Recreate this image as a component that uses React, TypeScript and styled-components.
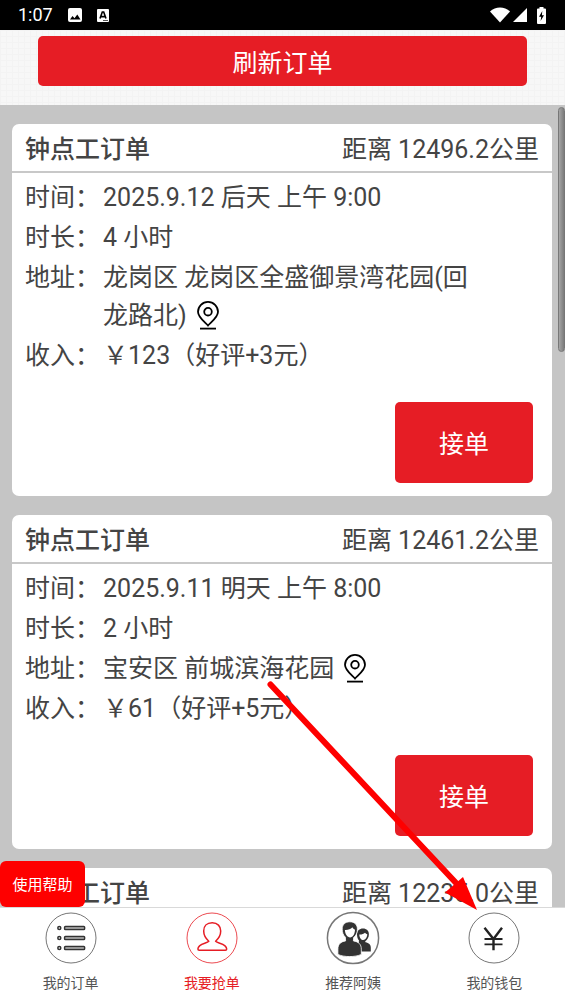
import React from "react";
import styled, { createGlobalStyle, css } from "styled-components";

const RED = "#e61d25";
const INK = "#444444";

const GlobalStyle = createGlobalStyle`
  *, *::before, *::after { box-sizing: border-box; }
  body {
    margin: 0;
    color: ${INK};
    font-family: Roboto, "Noto Sans CJK SC", sans-serif;
    font-size: 25px;
  }
  button { font-family: inherit; border: 0; padding: 0; cursor: pointer; }
  h2, dl, dt, dd { margin: 0; }
`;

const Screen = styled.div`
  position: relative;
  display: flex;
  flex-direction: column;
  height: 100vh;
  overflow: hidden;
  background: #c5c5c5;
`;

const StatusBar = styled.div`
  display: flex;
  flex: none;
  align-items: center;
  justify-content: space-between;
  height: 30px;
  padding: 0 19px 0 18px;
  background: #000;
  color: #fff;
  font-size: 18px;
  line-height: 30px;
`;

const StatusGroup = styled.div<{ $gap: number }>`
  display: flex;
  align-items: center;
  gap: ${(p) => p.$gap}px;
`;

const Toolbar = styled.header`
  flex: none;
  padding: 6px 38px 19px;
  background-color: #f7f7f7;
  background-image: linear-gradient(#f3f3f3 1px, transparent 1px),
    linear-gradient(90deg, #f3f3f3 1px, transparent 1px);
  background-size: 6px 6px;
`;

const RedButton = styled.button`
  background: ${RED};
  color: #fff;
  font-size: 25px;
  border-radius: 5px;
`;

const RefreshButton = styled(RedButton)`
  display: block;
  width: 100%;
  height: 50px;
`;

const ListArea = styled.main`
  position: relative;
  flex: 1;
  min-height: 0;
  overflow: hidden;
  padding: 19px 13px 0 12px;
`;

const CardList = styled.div`
  display: flex;
  flex-direction: column;
  gap: 19px;
`;

const ScrollThumb = styled.div`
  position: absolute;
  top: 2px;
  right: 0;
  width: 7px;
  height: 245px;
  border: 1px solid #777;
  border-radius: 4px;
  background: linear-gradient(90deg, #a6a6a6, #7c7c7c);
`;

const Card = styled.article`
  background: #fff;
  border-radius: 7px;
`;

const CardHead = styled.div`
  display: flex;
  align-items: center;
  justify-content: space-between;
  height: 49px;
  padding: 0 13px 2px;
  border-bottom: 2px solid #c8c8c8;
`;

const CardTitle = styled.h2`
  font-size: 25px;
  font-weight: 500;
`;

const CardBody = styled.div`
  display: flex;
  flex-direction: column;
  gap: 27px;
  padding: 6px 19px 13px 13px;
`;

const Details = styled.dl`
  display: flex;
  flex-direction: column;
  gap: 2px;
  line-height: 38px;
`;

const DetailRow = styled.div`
  display: flex;
  gap: 3px;
  padding-right: 48px;
`;

const Label = styled.dt`
  flex: none;
`;

const Value = styled.dd`
  min-width: 0;
`;

const PinLink = styled.button`
  margin-left: 10px;
  padding-bottom: 4px;
  background: none;
  color: #000;
  line-height: 0;
  vertical-align: middle;
`;

const AcceptButton = styled(RedButton)`
  align-self: flex-end;
  width: 138px;
  height: 81px;
  padding-bottom: 2px;
`;

const HelpButton = styled.button`
  position: absolute;
  left: 0;
  bottom: 0;
  width: 85px;
  height: 46px;
  padding-bottom: 2px;
  border-radius: 6px;
  background: #fe0000;
  color: #fff;
  font-size: 15px;
`;

const TabBar = styled.nav`
  display: grid;
  grid-template-columns: repeat(4, 1fr);
  flex: none;
  padding: 4px 0 11px;
  border-top: 1px solid #d9d9d9;
  background: #fff;
`;

const Tab = styled.a<{ $active?: boolean }>`
  display: flex;
  flex-direction: column;
  align-items: center;
  gap: 9px;
  color: #555;
  font-size: 14px;
  line-height: 20px;
  text-decoration: none;
  ${(p) =>
    p.$active &&
    css`
      color: ${RED};
    `}
`;

const Pointer = styled.svg`
  position: absolute;
  right: 86px;
  bottom: 92px;
  pointer-events: none;
`;

const PictureIcon = () => (
  <svg width="14" height="14" viewBox="0 0 14 14">
    <rect width="14" height="14" rx="2" fill="#fff" />
    <path d="M2 11.5 4.5 8l2 2.2L9.3 6.5l3.2 5z" fill="#000" />
  </svg>
);

const LetterIcon = () => (
  <svg width="12" height="13" viewBox="0 0 12 13">
    <rect width="12" height="13" rx="1" fill="#fff" />
    <path d="M3 9.5 5.3 3h1.4L9 9.5M4 7.6h4" fill="none" stroke="#000" strokeWidth="1.6" />
    <path d="M6 11.5h5" stroke="#555" strokeWidth="1" />
  </svg>
);

const WifiIcon = () => (
  <svg width="20" height="16" viewBox="0 0 20 16">
    <path d="M0 4.5C5.5-.9 14.5-.9 20 4.5L10 15.5z" fill="#fff" />
  </svg>
);

const SignalIcon = () => (
  <svg width="14" height="14" viewBox="0 0 14 14">
    <path d="M14 0v14H0z" fill="#fff" />
  </svg>
);

const BatteryIcon = () => (
  <svg width="9" height="17" viewBox="0 0 9 17">
    <path d="M2.5 0h4v1.5H8q1 0 1 1V16q0 1-1 1H1q-1 0-1-1V2.5q0-1 1-1h1.5z" fill="#fff" />
    <path d="M5.3 4 2 9.7h2.2L3.6 14 7 8.3H4.9z" fill="#000" />
  </svg>
);

const PinIcon = () => (
  <svg width="22" height="29" viewBox="0 0 22 29" fill="none" stroke="currentColor" strokeWidth="1.8">
    <path d="M11 24.5C8.5 21.5 1 16.5 1 10.700a10 9.800 0 0 1 20 0C21 16.500 13.500 21.500 11 24.500z" />
    <circle cx="11" cy="10.7" r="3.8" />
    <path d="M3 27.6h16" />
  </svg>
);

const ListIcon = () => (
  <svg width="52" height="52" viewBox="0 0 52 52" fill="none">
    <circle cx="26" cy="26" r="25" stroke="#666" strokeWidth="0.9" />
    {[16, 26, 36].map((y) => (
      <g key={y} stroke="#333" strokeWidth="1.5">
        <circle cx="14.3" cy={y} r="1.5" />
        <rect x="19.6" y={y - 1.6} width="20" height="3.2" rx="0.8" fill="#bbb" />
      </g>
    ))}
  </svg>
);

const PersonIcon = () => (
  <svg width="52" height="52" viewBox="0 0 52 52" fill="none" stroke={RED}>
    <circle cx="26" cy="26" r="25" strokeWidth="0.8" />
    <path
      d="M26.200 10.800c-5.400 0-8.500 3.500-8.500 8.200 0 4.300 2 7.500 5.100 10.200-2 2.400-10.700 2.300-10.900 7.800 0 .8.500 1.200 1.300 1.200h26.200c.8 0 1.300-.4 1.300-1.200-.2-5.500-8.900-5.400-11.100-7.800 3.100-2.700 5.100-5.900 5.100-10.200 0-4.700-3.100-8.200-8.500-8.200z"
      strokeWidth="1.5"
      strokeLinejoin="round"
    />
  </svg>
);

const PeopleIcon = () => (
  <svg width="54" height="52" viewBox="-1 0 54 52" overflow="visible">
    <circle cx="26" cy="26" r="25.6" fill="#fff" stroke="#777" strokeWidth="1.5" />
    <g fill="#333">
      <path d="M36 16.500c-3.600 0-6 2.300-6 5.700 0 2.600.6 4.800 2 6.300l-.5 3.500 1.500 7.500h10.800v-3.800c0-3.300-2-4.700-5.300-5.500l-.3-1c2.200-1.600 3.700-4 3.700-7 0-3.400-2.300-5.700-5.900-5.700z" />
      <path
        d="M32.300 22.400c2 .2 4.300-.4 5.700-1.700.6.900 1.500 1.400 2.300 1.600-.2 3.200-1.900 5.700-4 5.700s-3.900-2.400-4-5.600z"
        fill="#fff"
      />
      <path
        d="M22.800 9.800c-4.800 0-7.600 2.900-7.600 7.400 0 3.200 1 6 3.200 8l.2 3.700c-5 .8-7.700 3.300-7.700 8.300v5.200c6 2.900 17.300 2.900 23.400 0v-5.200c0-5-2.700-7.500-7.900-8.300l.2-3.400c2.500-1.800 3.800-4.800 3.800-8.300 0-4.500-2.800-7.400-7.600-7.400z"
        stroke="#fff"
        strokeWidth="0.8"
      />
      <path
        d="M17.900 18c3 .2 5.700-.7 7.500-2.700.7 1.300 1.600 2.100 2.600 2.500-.1 4.500-2.200 7.600-4.900 7.600s-5-3.200-5.200-7.400z"
        fill="#fff"
      />
    </g>
  </svg>
);

const WalletIcon = () => (
  <svg width="52" height="52" viewBox="0 0 52 52" fill="none">
    <circle cx="26" cy="26" r="25" stroke="#666" strokeWidth="0.9" />
    <g stroke="#222">
      <path d="m16.500 15.800 9 11.200 8.500-11.200M25.500 26.500V38.200" strokeWidth="2.4" />
      <path d="M16.500 27h18M16.500 32.300h18" strokeWidth="1.8" />
    </g>
  </svg>
);

interface Detail {
  label: string;
  value: string;
  located?: boolean;
}

interface Order {
  distance: string;
  details: Detail[];
}

const orders: Order[] = [
  {
    distance: "12496.2",
    details: [
      { label: "时间", value: "2025.9.12 后天 上午 9:00" },
      { label: "时长", value: "4 小时" },
      { label: "地址", value: "龙岗区 龙岗区全盛御景湾花园(回龙路北)", located: true },
      { label: "收入", value: "￥123（好评+3元）" },
    ],
  },
  {
    distance: "12461.2",
    details: [
      { label: "时间", value: "2025.9.11 明天 上午 8:00" },
      { label: "时长", value: "2 小时" },
      { label: "地址", value: "宝安区 前城滨海花园", located: true },
      { label: "收入", value: "￥61（好评+5元）" },
    ],
  },
  { distance: "12235.0", details: [] },
];

const OrderCard = ({ order }: { order: Order }) => (
  <Card>
    <CardHead>
      <CardTitle>钟点工订单</CardTitle>
      <span>距离 {order.distance}公里</span>
    </CardHead>
    {order.details.length > 0 && (
      <CardBody>
        <Details>
          {order.details.map((d) => (
            <DetailRow key={d.label}>
              <Label>{d.label}：</Label>
              <Value>
                {d.value}
                {d.located && (
                  <PinLink type="button" aria-label="查看地图">
                    <PinIcon />
                  </PinLink>
                )}
              </Value>
            </DetailRow>
          ))}
        </Details>
        <AcceptButton type="button">接单</AcceptButton>
      </CardBody>
    )}
  </Card>
);

export default function App() {
  return (
    <Screen lang="zh-CN">
      <GlobalStyle />
      <StatusBar>
        <StatusGroup $gap={15}>
          <span>1:07</span>
          <PictureIcon />
          <LetterIcon />
        </StatusGroup>
        <StatusGroup $gap={10}>
          <StatusGroup $gap={3}>
            <WifiIcon />
            <SignalIcon />
          </StatusGroup>
          <BatteryIcon />
        </StatusGroup>
      </StatusBar>
      <Toolbar>
        <RefreshButton type="button">刷新订单</RefreshButton>
      </Toolbar>
      <ListArea>
        <CardList>
          {orders.map((order) => (
            <OrderCard key={order.distance} order={order} />
          ))}
        </CardList>
        <ScrollThumb />
        <HelpButton type="button">使用帮助</HelpButton>
      </ListArea>
      <TabBar>
        <Tab href="#orders">
          <ListIcon />
          我的订单
        </Tab>
        <Tab href="#grab" $active>
          <PersonIcon />
          我要抢单
        </Tab>
        <Tab href="#refer">
          <PeopleIcon />
          推荐阿姨
        </Tab>
        <Tab href="#wallet">
          <WalletIcon />
          我的钱包
        </Tab>
      </TabBar>
      <Pointer width="214" height="232" viewBox="0 0 214 232" fill="#fe0000">
        <path d="M5.5 4.5 192 204" stroke="#fe0000" strokeWidth="6" strokeLinecap="round" />
        <path d="M212 230 198 197l-18 15.5z" />
      </Pointer>
    </Screen>
  );
}
